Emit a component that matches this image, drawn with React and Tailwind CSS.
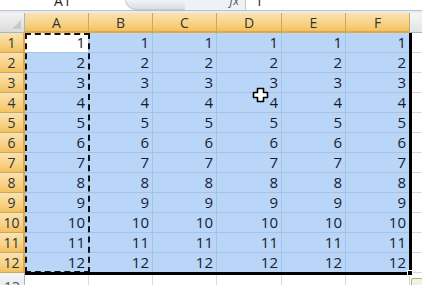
const COLS = ['A', 'B', 'C', 'D', 'E', 'F'];
const ROWS = Array.from({ length: 12 }, (_, i) => i + 1);

const font = { fontFamily: '"Open Sans", "Liberation Sans", sans-serif' };

function CrossCursor() {
  return (
    <svg width="17" height="16" viewBox="0 0 17 16" className="absolute left-[252px] top-[87px]">
      <path
        d="M5.5 1.5h6v4h4v5h-4v4h-6v-4h-4v-5h4z"
        fill="#fff"
        stroke="#000"
        strokeWidth="1.6"
        strokeLinejoin="round"
      />
    </svg>
  );
}

export default function App() {
  return (
    <div className="relative w-[422px] h-[285px] overflow-hidden bg-white text-[#1a1a2e]" style={font}>
      {/* formula bar, cut off at the top */}
      <div className="flex h-[11px] border-b border-[#b9c3cf] bg-white overflow-hidden">
        <div className="w-[125px] flex justify-center">
          <span className="text-[14px] leading-none -mt-[6px] text-[#222]">A1</span>
        </div>
        <div className="w-[120px] flex items-end">
          <div className="w-[60px] h-[11px] rounded-bl-[14px] bg-gradient-to-b from-[#f4f6f9] to-[#d9dee6] border-l border-b border-[#c3c9d2]" />
          <div className="flex-1 h-[11px] bg-[#eef1f5] flex justify-end pr-[6px]">
            <span className="italic text-[12px] leading-none -mt-[4px] text-[#555]">fx</span>
          </div>
        </div>
        <div className="w-px bg-[#c3c9d2]" />
        <div className="pl-[9px]">
          <span className="text-[14px] leading-none -mt-[6px] block text-[#222]">1</span>
        </div>
      </div>
      <div className="h-[2px] bg-[#e8ebef]" />

      {/* sheet grid */}
      <div className="grid grid-cols-[25px_64px_64px_64px_65px_64px_64px_1fr] grid-rows-[20px_repeat(12,20px)_22px]">
        <div className="bg-gradient-to-b from-[#f3f3f3] to-[#dcdcdc] border-r border-b border-[#9eb6ce] flex items-end justify-end p-[3px]">
          <div className="w-0 h-0 border-l-[9px] border-l-transparent border-b-[9px] border-b-[#c9c9c9]" />
        </div>
        {COLS.map(c => (
          <div
            key={c}
            className="bg-gradient-to-b from-[#fbe2b0] via-[#f8d58c] to-[#f2c260] border-r border-[#c9a566] border-b-2 border-b-[#e2a848] flex items-center justify-center text-[14px] text-[#333]"
          >
            {c}
          </div>
        ))}
        <div className="bg-gradient-to-b from-[#f6f6f6] to-[#e0e4e9] border-b border-[#9eb6ce]" />

        {ROWS.map(r => (
          <Row key={r} r={r} />
        ))}

        <div className="bg-gradient-to-b from-[#f2f4f7] to-[#e3e7ec] border-r border-[#9eb6ce] flex items-start justify-center pt-[3px] text-[14px] text-[#555]">
          13
        </div>
        {COLS.map(c => (
          <div key={c} className="border-r border-[#d9d9d9] bg-white" />
        ))}
        <div className="bg-white" />
      </div>

      {/* copy marquee around column A */}
      <div className="absolute left-[25px] top-[33px] w-[65px] h-[240px] border-2 border-dashed border-[#111]" />
      {/* selection border */}
      <div className="absolute left-[25px] top-[33px] w-[387px] h-[242px] border-r-[3px] border-b-[3px] border-black" />
      <div className="absolute left-[407px] top-[270px] w-[6px] h-[6px] bg-black border border-white" />

      {/* paste options icon peeking */}
      <div className="absolute left-[411px] top-[278px] w-[14px] h-[12px] bg-[#f4f1e4] border border-[#b9b08b] rounded-[2px]" />

      <CrossCursor />
    </div>
  );
}

function Row({ r }) {
  return (
    <>
      <div className="bg-gradient-to-b from-[#fbe2b0] via-[#f8d58c] to-[#f2c260] border-r-2 border-r-[#e2a848] border-b border-[#c9a566] flex items-center justify-center text-[14px] text-[#333]">
        {r}
      </div>
      {COLS.map((c, i) => (
        <div
          key={c}
          className={
            (r === 1 && i === 0 ? 'bg-white ' : 'bg-[#b9d6f8] ') +
            'border-r border-b border-[#a6c2e6] flex items-center justify-end pr-[3px] text-[15px]'
          }
        >
          {r}
        </div>
      ))}
      <div className="border-b border-[#d9d9d9] bg-white" />
    </>
  );
}
